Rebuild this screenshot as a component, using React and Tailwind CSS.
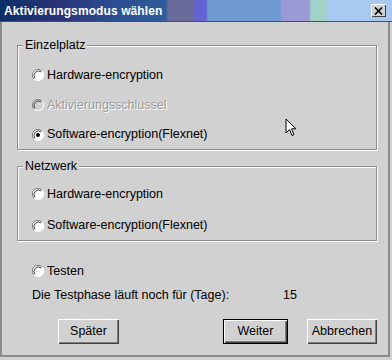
import React from "react";

function Radio({ checked, disabled }) {
  return (
    <svg width="12" height="12" viewBox="0 0 12 12" className="shrink-0">
      <circle cx="6" cy="6" r="5.5" fill={disabled ? "#d1d1d1" : "#ffffff"} />
      <path d="M10 2 A5.5 5.5 0 0 0 2 10" fill="none" stroke="#808080" strokeWidth="1" />
      <path d="M9.2 2.9 A4.5 4.5 0 0 0 2.9 9.2" fill="none" stroke="#404040" strokeWidth="1" />
      <path d="M2 10 A5.5 5.5 0 0 0 10 2" fill="none" stroke="#ffffff" strokeWidth="1" />
      {checked && <circle cx="6" cy="6" r="2" fill="#000" />}
    </svg>
  );
}

function Option({ label, checked, disabled, className }) {
  return (
    <div className={`flex items-center gap-[3px] pl-[14px] ${className}`}>
      <Radio checked={checked} disabled={disabled} />
      <span
        className={
          disabled
            ? "text-[#9a9a9a] [text-shadow:1px_1px_0_#ffffff]"
            : "text-black"
        }
      >
        {label}
      </span>
    </div>
  );
}

function Group({ title, children, className }) {
  return (
    <fieldset
      className={`ml-[15px] mr-[11px] border border-[#8c8c8c] shadow-[inset_1px_1px_0_#ffffff,1px_1px_0_#ffffff] ${className}`}
    >
      <legend className="ml-[5px] px-[2px] leading-[14px] bg-[#d1d1d1]">
        {title}
      </legend>
      {children}
    </fieldset>
  );
}

function Button({ children, primary, className }) {
  return (
    <button
      className={`h-[25px] flex items-center justify-center bg-[#d1d1d1] ${
        primary
          ? "border border-black shadow-[inset_1px_1px_0_#ffffff,inset_-1px_-1px_0_#404040,inset_-2px_-2px_0_#808080]"
          : "shadow-[inset_1px_1px_0_#ffffff,inset_-1px_-1px_0_#404040,inset_-2px_-2px_0_#808080]"
      } ${className}`}
    >
      {children}
    </button>
  );
}

export default function App() {
  return (
    <div className="w-[392px] h-[360px] bg-[#d1d1d1] text-[12.5px] text-black font-['Liberation_Sans',Arial,sans-serif] relative overflow-hidden">
      {/* title bar */}
      <div className="h-[22px] flex items-center justify-between pl-[4px] pr-[6px] border-b border-[#505050] bg-[linear-gradient(90deg,#0c2f66_0px,#2a3478_60px,#2c4c90_110px,#2f5d9c_166px,#6a6a9a_168px,#6a6a9a_193px,#6262d2_195px,#6262d2_206px,#6f9bd2_208px,#6f9bd2_280px,#9c9ad6_282px,#9c9ad6_309px,#a0d2c8_311px,#a0d2c8_326px,#a9c9f2_328px,#a9c9f2_392px)]">
        <span className="text-white font-bold text-[12px] tracking-[0.1px]">
          Aktivierungsmodus wählen
        </span>
        <div className="w-[15px] h-[13px] bg-[#d1d1d1] flex items-center justify-center shadow-[inset_1px_1px_0_#ffffff,inset_-1px_-1px_0_#404040]">
          <svg width="9" height="8" viewBox="0 0 9 8">
            <path d="M1 0.5 L8 7.5 M8 0.5 L1 7.5" stroke="#000" strokeWidth="1.6" />
          </svg>
        </div>
      </div>

      <div className="flex flex-col pt-[16px] border-l-2 border-r-2 border-b-2 border-[#8a8a8a] h-[335px] w-[390px]">
        <Group title="Einzelplatz">
          <div className="flex flex-col pt-[8px]">
            <Option className="h-[30px]" label="Hardware-encryption" />
            <Option className="h-[30px]" label="Aktivierungsschlussel" disabled />
            <Option className="h-[29px]" label="Software-encryption(Flexnet)" checked />
          </div>
        </Group>

        <Group title="Netzwerk" className="mt-[9px]">
          <div className="flex flex-col pt-[6px] gap-[2px]">
            <Option className="h-[30px]" label="Hardware-encryption" />
            <Option className="h-[29px]" label="Software-encryption(Flexnet)" />
          </div>
        </Group>

        <div className="px-[16px] mt-[15px]">
          <Option className="h-[30px]" label="Testen" />
          <div className="flex items-center h-[16px] mt-[1px] pl-[14px]">
            <span className="w-[251px]">Die Testphase läuft noch für (Tage):</span>
            <span>15</span>
          </div>
        </div>

        <div className="flex items-center mt-[16px] pl-[56px] pr-[11px]">
          <Button className="w-[61px]">Später</Button>
          <Button primary className="w-[65px] ml-[104px]">Weiter</Button>
          <Button className="w-[70px] ml-[19px]">Abbrechen</Button>
        </div>
      </div>

      {/* mouse cursor */}
      <svg
        className="absolute left-[285px] top-[118px]"
        width="14"
        height="20"
        viewBox="0 0 14 20"
      >
        <path
          d="M1 1 L1 15 L4.5 11.5 L7 17.5 L9 16.5 L6.5 10.8 L11 10.8 Z"
          fill="#ffffff"
          stroke="#000"
          strokeWidth="1"
        />
      </svg>
    </div>
  );
}
